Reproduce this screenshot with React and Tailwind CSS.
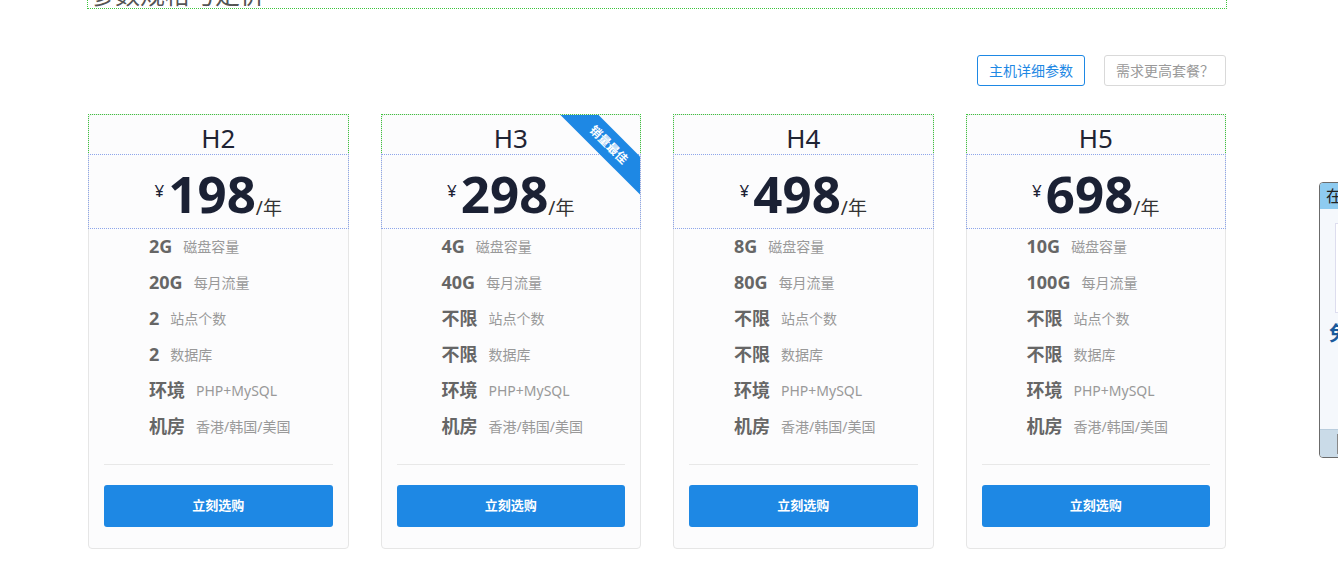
import React from "react";

const plans = [
  { name: "H2", price: 198, disk: "2G", flow: "20G", sites: "2", db: "2" },
  { name: "H3", price: 298, disk: "4G", flow: "40G", sites: "不限", db: "不限", hot: true },
  { name: "H4", price: 498, disk: "8G", flow: "80G", sites: "不限", db: "不限" },
  { name: "H5", price: 698, disk: "10G", flow: "100G", sites: "不限", db: "不限" },
];

function PlanCard({ plan }) {
  const rows = [
    [plan.disk, "磁盘容量"],
    [plan.flow, "每月流量"],
    [plan.sites, "站点个数"],
    [plan.db, "数据库"],
    ["环境", "PHP+MySQL"],
    ["机房", "香港/韩国/美国"],
  ];

  return (
    <div className="relative rounded border border-[#e6e6e6] bg-[#fcfcfd] pb-[21px]">
      <div className="h-[39px] pt-[3px] text-center text-[26px] leading-[40px] text-[#1f2433] outline outline-1 outline-dotted outline-[#3ec63e]">
        {plan.name}
      </div>
      <div className="mt-px flex h-[73px] items-center justify-center pt-[2px] text-[#1b2134] outline outline-1 outline-dotted outline-[#8ea6ea]">
        <span className="mb-[4px] mr-[4px] text-[17px] leading-[20px]">¥</span>
        <span className="text-[51px] font-bold leading-[56px]">{plan.price}</span>
        <span className="mt-[30px] text-[19px] leading-[24px] text-[#333]">/年</span>
      </div>
      <ul className="pl-[60px]">
        {rows.map(([v, l], i) => (
          <li key={i} className="flex h-[36px] items-center">
            <span className="text-[18px] font-bold text-[#666]">{v}</span>
            <span className="ml-[11px] text-[14px] text-[#999]">{l}</span>
          </li>
        ))}
      </ul>
      <div className="mx-[15px] mt-[20px] border-t border-[#e8e8e8]" />
      <button className="mx-[15px] mt-[20px] block h-[42px] w-[calc(100%-30px)] rounded-[3px] bg-[#1e88e4] text-[13px] font-bold text-white">
        立刻选购
      </button>
      {plan.hot && (
        <div className="pointer-events-none absolute inset-0 overflow-hidden rounded">
          <div className="absolute right-[-30px] top-[16px] flex h-[27px] w-[122px] rotate-45 items-center justify-center bg-[#1e88e4] text-[12px] font-bold text-white">
            销量最佳
          </div>
        </div>
      )}
    </div>
  );
}

export default function App() {
  return (
    <div
      className="relative h-[566px] overflow-hidden bg-white"
      style={{ fontFamily: '"Noto Sans", "Noto Sans CJK SC", sans-serif' }}
    >
      <div className="mx-[88px] w-[1138px]">
        <div className="mt-[-32px] h-[40px] pl-[2px] pt-[11px] text-[25px] leading-[30px] text-[#555] outline outline-1 outline-dotted outline-[#3ec63e]">
          参数规格与定价
        </div>
        <div className="mt-[47px] flex justify-end gap-[19px]">
          <button className="h-[31px] rounded-[3px] border border-[#1e88e4] px-[11px] text-[14px] text-[#1e88e4]">
            主机详细参数
          </button>
          <button className="h-[31px] rounded-[3px] border border-[#d9d9d9] px-[11px] text-[14px] text-[#999]">
            需求更高套餐？
          </button>
        </div>
        <div className="mt-[28px] grid grid-cols-4 gap-x-[32px]">
          {plans.map((p) => (
            <PlanCard key={p.name} plan={p} />
          ))}
        </div>
      </div>

      {/* floating service widget, mostly off screen */}
      <div className="absolute left-[1319px] top-[182px] flex h-[276px] w-[140px] flex-col overflow-hidden rounded-[4px] border border-[#6b6b6b] bg-[#f5f8fc]">
        <div className="h-[26px] bg-[#8ecbf0] pl-[6px] text-[16px] leading-[26px] text-[#222]">在线客服</div>
        <div className="mx-[15px] mt-[14px] h-[90px] border border-[#dde] bg-white" />
        <div className="mt-[6px] pl-[9px] text-[20px] font-bold text-[#1a5a9c]">免费咨询</div>
        <div className="mt-auto h-[28px] border-t border-[#b9cddd] bg-[#cadbe8]">
          <div className="ml-[17px] mt-[4px] h-[20px] w-[60px] border border-[#888] bg-[#f5f5f5]" />
        </div>
      </div>
    </div>
  );
}
